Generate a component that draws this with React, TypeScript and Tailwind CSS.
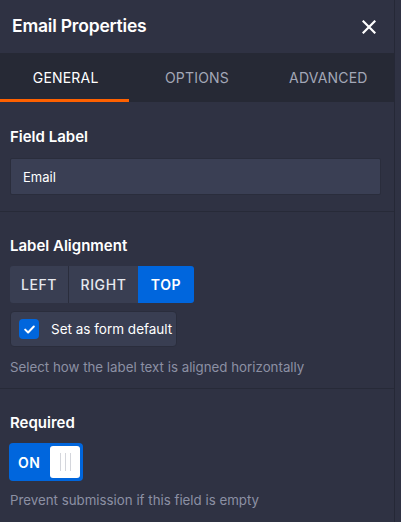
import { useState } from 'react';

const TABS = ['GENERAL', 'OPTIONS', 'ADVANCED'];
const ALIGNS = ['LEFT', 'RIGHT', 'TOP'];

export default function App() {
  const [tab, setTab] = useState('GENERAL');
  const [label, setLabel] = useState('Email');
  const [align, setAlign] = useState('TOP');
  const [isDefault, setIsDefault] = useState(true);
  const [required, setRequired] = useState(true);

  return (
    <div
      className="w-[401px] h-[522px] bg-[#2f3243] overflow-hidden"
      style={{ fontFamily: 'Inter, "Open Sans", sans-serif' }}
    >
      <div className="w-[395px] h-full border-r border-[#252836] flex flex-col">
        {/* header */}
        <div className="h-[53px] flex items-center justify-between pl-3 pr-[18px] shrink-0">
          <h1 className="text-white text-[17.5px] font-semibold tracking-[-0.2px]">Email Properties</h1>
          <button className="text-white">
            <svg width="14" height="14" viewBox="0 0 14 14" fill="none" stroke="currentColor" strokeWidth="2.2" strokeLinecap="square">
              <path d="M1.5 1.5l11 11M12.5 1.5l-11 11" />
            </svg>
          </button>
        </div>

        {/* tabs */}
        <div className="h-[49px] bg-[#262935] grid grid-cols-3 shrink-0">
          {TABS.map((t) => (
            <button
              key={t}
              onClick={() => setTab(t)}
              className={`relative text-[14px] tracking-[0.2px] ${
                tab === t ? 'text-white' : 'text-[#a3a7b7]'
              }`}
            >
              {t}
              {tab === t && <span className="absolute left-0 right-[2px] bottom-0 h-[3px] bg-[#ff6100]" />}
            </button>
          ))}
        </div>

        {/* field label */}
        <div className="px-[10px] pt-[25px] pb-[16px] border-b border-[#272a38]">
          <label className="block text-white text-[15px] font-semibold mb-[11px] leading-5">Field Label</label>
          <input
            value={label}
            onChange={(e) => setLabel(e.target.value)}
            className="w-[371px] h-[37px] bg-[#3a3f54] border border-[#2a2d3c] rounded-[2px] px-3 text-[13px] text-white outline-none"
          />
        </div>

        {/* label alignment */}
        <div className="px-[10px] pt-[24px] pb-[11px] border-b border-[#272a38]">
          <label className="block text-white text-[15px] font-semibold mb-[10px] leading-5">Label Alignment</label>
          <div className="flex h-[37px] w-fit rounded-[3px] overflow-hidden">
            {ALIGNS.map((a, i) => (
              <button
                key={a}
                onClick={() => setAlign(a)}
                className={`text-[14px] font-medium tracking-[0.6px] ${i === 0 ? 'w-[58px]' : i === 1 ? 'w-[70px]' : 'w-[56px]'} ${
                  i > 0 && align !== a ? 'border-l border-[#2a2d3c]' : ''
                } ${align === a ? 'bg-[#0066dd] text-white font-semibold' : 'bg-[#393e52] text-[#e6e8ee]'}`}
              >
                {a}
              </button>
            ))}
          </div>
          <button
            onClick={() => setIsDefault(!isDefault)}
            className="mt-2 h-[36px] w-[167px] flex items-center gap-[12px] pl-2 bg-[#393e52] border border-[#2a2d3c] rounded-[4px]"
          >
            <span
              className={`w-[20px] h-[20px] rounded-[4px] flex items-center justify-center ${
                isDefault ? 'bg-[#0066dd]' : 'bg-[#2f3243] border border-[#555b73]'
              }`}
            >
              {isDefault && (
                <svg width="11" height="9" viewBox="0 0 11 9" fill="none" stroke="white" strokeWidth="2" strokeLinecap="round" strokeLinejoin="round">
                  <path d="M1.2 4.6l2.9 2.9 5.7-6" />
                </svg>
              )}
            </span>
            <span className="text-[13.5px] text-white">Set as form default</span>
          </button>
          <p className="mt-[10px] text-[13.3px] text-[#8c90a3] leading-5">Select how the label text is aligned horizontally</p>
        </div>

        {/* required */}
        <div className="px-[9px] pt-[24px]">
          <label className="block text-white text-[15px] font-semibold mb-[10px] leading-5 pl-[1px]">Required</label>
          <button
            onClick={() => setRequired(!required)}
            className={`w-[74px] h-[38px] rounded-[4px] flex items-center justify-between pl-[9px] pr-[3px] ${
              required ? 'bg-[#0066dd]' : 'bg-[#4b5068]'
            }`}
          >
            <span className="text-white text-[14px] font-semibold tracking-[0.5px]">{required ? 'ON' : 'OFF'}</span>
            <span className="w-[30px] h-[32px] bg-white rounded-[3px] flex items-center justify-center gap-[4px]">
              <span className="w-px h-[18px] bg-[#d4d6dc]" />
              <span className="w-px h-[18px] bg-[#d4d6dc]" />
              <span className="w-px h-[18px] bg-[#d4d6dc]" />
            </span>
          </button>
          <p className="mt-[9px] text-[13.3px] text-[#8c90a3] leading-5 pl-[1px]">Prevent submission if this field is empty</p>
        </div>
      </div>
    </div>
  );
}
